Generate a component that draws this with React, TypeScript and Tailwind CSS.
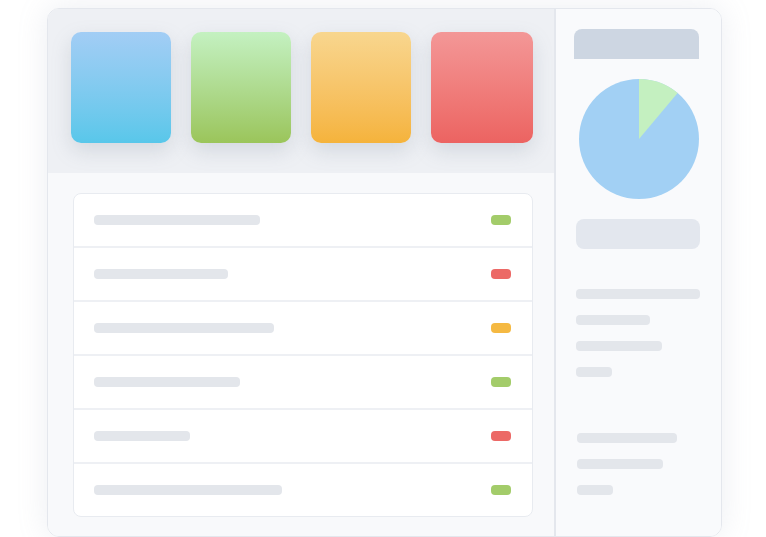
const tiles = [
  "from-[#a2cdf5] to-[#58c7ea]",
  "from-[#c4f1c1] to-[#9bc55a]",
  "from-[#f8d68e] to-[#f5b33b]",
  "from-[#f39797] to-[#ec6361]",
]

const rows = [
  { w: "w-[166px]", badge: "bg-[#a3cc6a]" },
  { w: "w-[134px]", badge: "bg-[#ec6966]" },
  { w: "w-[180px]", badge: "bg-[#f5b942]" },
  { w: "w-[146px]", badge: "bg-[#a3cc6a]" },
  { w: "w-[96px]", badge: "bg-[#ec6966]" },
  { w: "w-[188px]", badge: "bg-[#a3cc6a]" },
]

function Pie() {
  return (
    <svg width="120" height="120" viewBox="0 0 120 120">
      <circle cx="60" cy="60" r="60" fill="#a2d0f4" />
      <path d="M60 60 L60 0 A60 60 0 0 1 98.6 14 Z" fill="#c4f0c0" />
    </svg>
  )
}

export default function App() {
  return (
    <div className="w-[766px] h-[537px] overflow-hidden bg-white">
      <div className="ml-[47px] mt-[8px] w-[675px] h-[529px] flex rounded-xl border border-[#e4e7ed] overflow-hidden shadow-[0_0_30px_rgba(148,163,184,0.18)]">
        {/* Main */}
        <div className="w-[506px] flex flex-col">
          <div className="h-[164px] bg-[#eef0f4] pl-[23px] pt-[23px] flex gap-[20px]">
            {tiles.map((t, i) => (
              <div
                key={i}
                className={`${i === 3 ? "w-[102px]" : "w-[100px]"} h-[111px] rounded-[10px] bg-gradient-to-b ${t} shadow-[0_8px_20px_rgba(120,130,150,0.22)]`}
              />
            ))}
          </div>
          <div className="flex-1 bg-[#f8f9fb] pl-[25px] pt-[20px]">
            <div className="w-[460px] rounded-lg border border-[#e8ebf0] bg-white">
              {rows.map((r, i) => (
                <div
                  key={i}
                  className={`flex items-center justify-between pl-[20px] pr-[21px] ${i > 0 ? "h-[54px] border-t-2 border-[#eef0f4]" : "h-[52px]"}`}
                >
                  <div className={`${r.w} h-[10px] rounded-[4px] bg-[#e3e6eb]`} />
                  <div className={`w-[20px] h-[10px] rounded-[4px] ${r.badge}`} />
                </div>
              ))}
            </div>
          </div>
        </div>

        {/* Sidebar */}
        <div className="flex-1 border-l-2 border-[#e4e7ed] bg-[#f9fafc] pl-[18px] pt-[20px] flex flex-col">
          <div className="w-[125px] h-[30px] rounded-t-lg bg-[#cdd6e2]" />
          <div className="mt-[20px] ml-[5px]">
            <Pie />
          </div>
          <div className="mt-[20px] ml-[2px] w-[124px] h-[30px] rounded-lg bg-[#e3e7ee]" />
          <div className="mt-[40px] ml-[2px] flex flex-col gap-[16px]">
            <div className="w-[124px] h-[10px] rounded-[4px] bg-[#e3e6eb]" />
            <div className="w-[74px] h-[10px] rounded-[4px] bg-[#e3e6eb]" />
            <div className="w-[86px] h-[10px] rounded-[4px] bg-[#e3e6eb]" />
            <div className="w-[36px] h-[10px] rounded-[4px] bg-[#e3e6eb]" />
          </div>
          <div className="mt-[56px] ml-[3px] flex flex-col gap-[16px]">
            <div className="w-[100px] h-[10px] rounded-[4px] bg-[#e3e6eb]" />
            <div className="w-[86px] h-[10px] rounded-[4px] bg-[#e3e6eb]" />
            <div className="w-[36px] h-[10px] rounded-[4px] bg-[#e3e6eb]" />
          </div>
        </div>
      </div>
    </div>
  )
}
